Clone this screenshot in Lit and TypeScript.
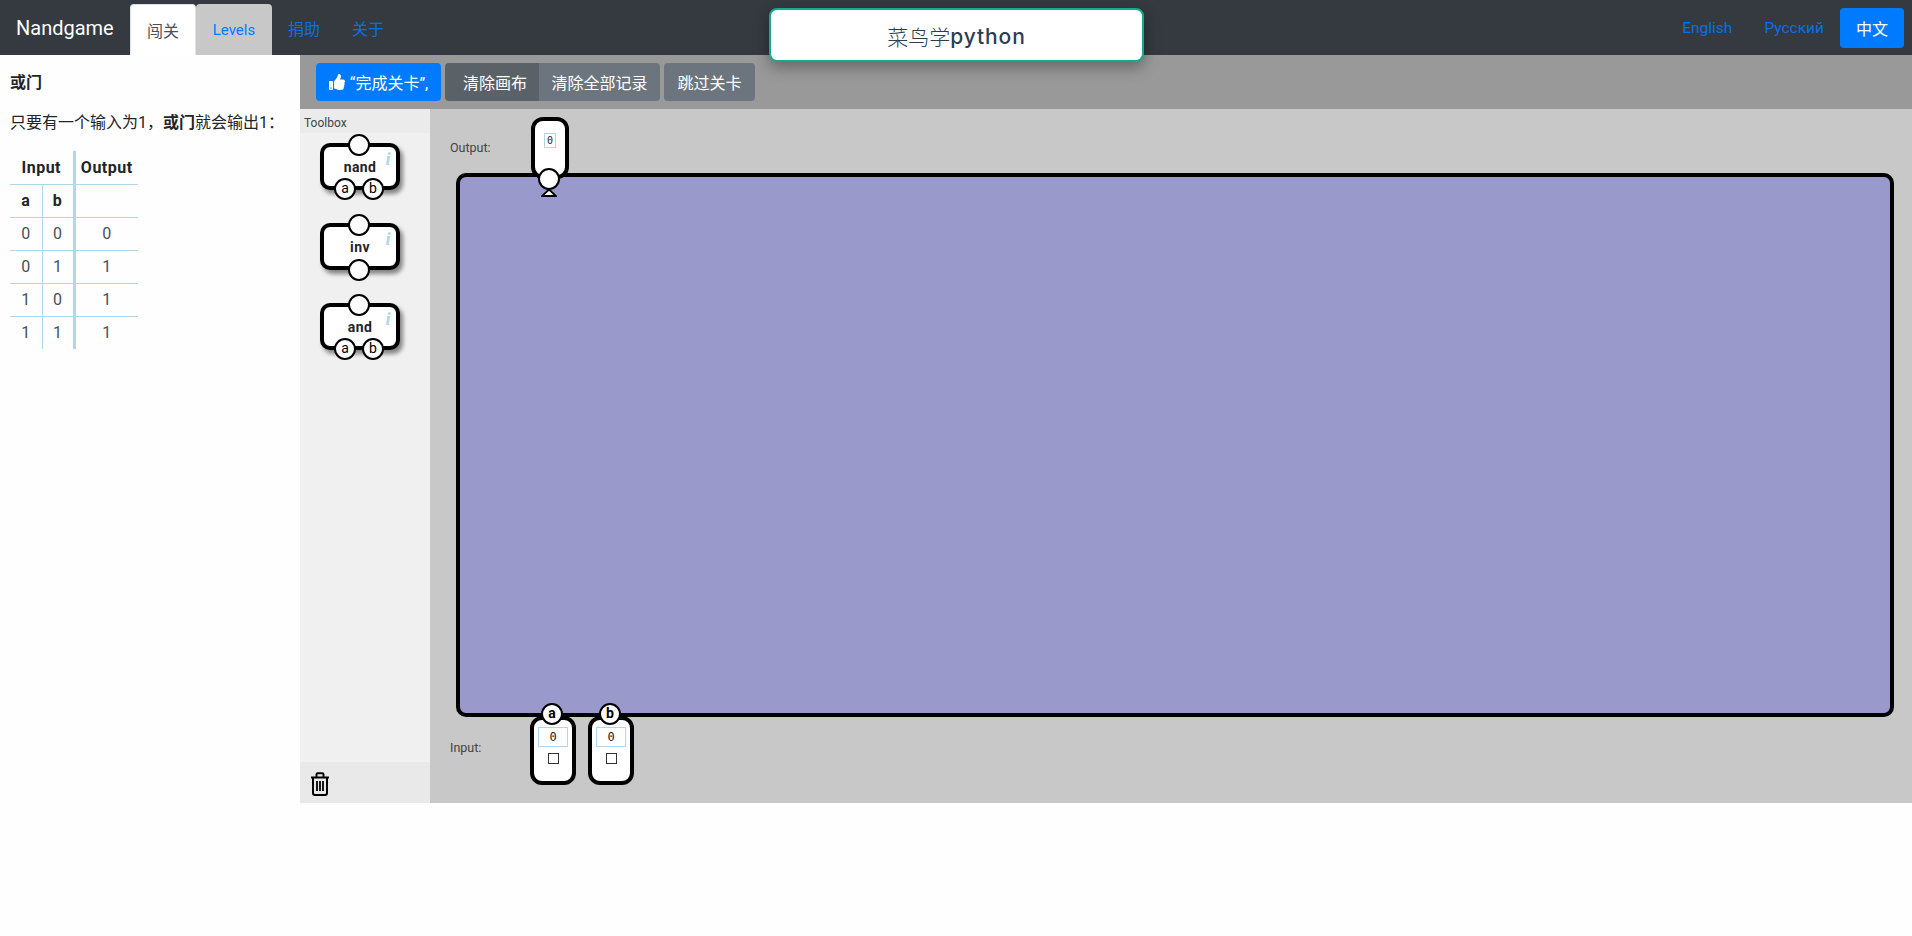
import { LitElement, html, css, svg } from "lit";
import { customElement } from "lit/decorators.js";

const SANS = css`Roboto, "Noto Sans CJK SC", sans-serif`;

const thumb = svg`<path d="M104 224H24c-13.255 0-24 10.745-24 24v240c0 13.255 10.745 24 24 24h80c13.255 0 24-10.745 24-24V248c0-13.255-10.745-24-24-24zM64 472c-13.255 0-24-10.745-24-24s10.745-24 24-24 24 10.745 24 24-10.745 24-24 24zM384 81.452c0 42.416-25.97 66.208-33.277 94.548h101.723c33.397 0 59.397 27.746 59.553 58.098.084 17.938-7.546 37.249-19.439 49.197l-.11.11c9.836 23.337 8.237 56.037-9.308 79.469 8.681 25.895-.069 57.704-16.382 74.757 4.298 17.598 2.244 32.575-6.148 44.632C440.202 511.587 389.616 512 346.839 512l-2.845-.001c-48.287-.017-87.806-17.598-119.56-31.725-15.957-7.099-36.821-15.887-52.651-16.178-6.54-.12-11.783-5.457-11.783-11.998v-213.77c0-3.2 1.282-6.271 3.558-8.521 39.614-39.144 56.648-80.587 89.117-113.111 14.804-14.832 20.188-37.236 25.393-58.902C282.515 39.293 291.817 0 312 0c24 0 72 8 72 81.452z"/>`;

@customElement("app-root")
export class AppRoot extends LitElement {
  static styles = css`
    :host { display: block; width: 1912px; height: 936px; background: #fefefe; font-family: ${SANS}; font-size: 16px; color: #212529; overflow: hidden; position: relative; }
    * { box-sizing: border-box; }
    nav { height: 55px; background: #343a40; display: flex; align-items: flex-end; padding: 0 8px 0 16px; }
    .brand { color: #fff; font-size: 20px; width: 114px; align-self: center; line-height: 30px; white-space: nowrap; }
    .tab { height: 51px; display: flex; align-items: center; justify-content: center; border-radius: 4px 4px 0 0; font-size: 16px; }
    .tab.on { width: 66px; background: #fff; color: #495057; border: 1px solid #dee2e6; border-bottom: 0; }
    .tab.lv { width: 76px; background: #c8c8c8; color: #007bff; font-size: 15px; }
    .link { color: #007bff; height: 51px; display: flex; align-items: center; padding-bottom: 3px; white-space: nowrap; opacity: .85; }
    .l1 { margin-left: 16px; }
    .l2 { margin-left: 32px; }
    .spacer { flex: 1; }
    .en { margin-right: 32px; font-size: 15.5px; }
    .ru { margin-right: 16px; font-size: 15.5px; }
    .zh { width: 64px; height: 40px; margin-bottom: 7px; background: #007bff; color: #fff; border-radius: 4px; display: flex; align-items: center; justify-content: center; }
    .toast { position: absolute; left: 769px; top: 8px; width: 375px; height: 54px; background: #fff; border: 2px solid #16a98c; border-radius: 8px; box-shadow: 0 5px 15px rgba(0,0,0,.35); display: flex; align-items: center; justify-content: center; font-family: Inter, "Noto Sans CJK SC", sans-serif; font-size: 21px; color: #2c3e50; padding-top: 2px; }
    .toast b { font-weight: 500; letter-spacing: .9px; }
    .toast span { font-weight: 300; }
    main { display: grid; grid-template-columns: 300px 1fr; height: 748px; }
    .help { padding: 0 10px; }
    h1 { font-size: 16px; font-weight: 700; margin: 0; padding-top: 16px; line-height: 24px; }
    p { margin: 16px 0 0; line-height: 24px; font-size: 16px; white-space: nowrap; }
    p b { font-weight: 700; }
    table { border-collapse: collapse; margin-top: 16px; width: 128px; table-layout: fixed; font-size: 16px; }
    col.n { width: 32px; }
    col.w { width: 64px; }
    th, td { height: 33px; padding: 0; text-align: center; border-bottom: 1px solid #add8e6; font-weight: 400; color: #212529; }
    td { color: #495057; }
    th { font-weight: 700; letter-spacing: .5px; }
    tr:last-child td { border-bottom: 0; }
    .cb { border-left: 1px solid #add8e6; }
    .co { border-left: 3px solid #add8e6; }
    .work { display: grid; grid-template-rows: 54px 694px; min-width: 0; }
    .bar { background: #999; display: flex; gap: 4px; padding: 8px 16px 0; }
    .btn { height: 38px; border-radius: 4px; color: #fff; background: #6c757d; display: flex; align-items: center; justify-content: center; font-size: 16px; white-space: nowrap; }
    .primary { width: 125px; background: #007bff; gap: 5px; }
    .primary svg { width: 16px; height: 16px; fill: #fff; }
    .group { display: flex; }
    .clear { width: 94px; background: #5a6268; border-radius: 4px 0 0 4px; padding-left: 6px; }
    .all { width: 121px; border-radius: 0 4px 4px 0; }
    .skip { width: 91px; }
    .panes { display: grid; grid-template-columns: 130px 1fr; min-height: 0; }
    .toolbox { background: #f0f0f0; display: flex; flex-direction: column; }
    .tb-h { height: 24px; background: #ebebeb; font-size: 12px; color: #444; padding-left: 4px; line-height: 28px; }
    .tb-body { flex: 1; display: flex; flex-direction: column; gap: 33px; padding: 10px 0 0 20px; }
    .trash { height: 41px; background: #e9e9e9; padding: 10px 0 0 10px; }
    .trash svg { display: block; width: 20px; height: 24px; }
    .gate { position: relative; width: 80px; height: 47px; background: #fff; border: 4px solid #000; border-radius: 10px; box-shadow: 3px 4px 4px rgba(0,0,0,.45); display: flex; align-items: center; justify-content: center; font-weight: 700; font-size: 14px; letter-spacing: .4px; }
    .pin { position: absolute; width: 22px; height: 22px; background: #fff; border: 2.5px solid #000; border-radius: 50%; display: flex; align-items: center; justify-content: center; font-size: 14px; font-weight: 400; letter-spacing: 0; line-height: 1; padding-bottom: 2px; color: #000; }
    .pin.top { left: 24px; top: -13px; }
    .pin.bot { left: 24px; bottom: -15px; }
    .pin.a { left: 10px; bottom: -14px; }
    .pin.b { left: 38px; bottom: -14px; }
    .info { position: absolute; right: 5px; top: 3px; color: #add8e6; font: italic 700 18px/18px "Liberation Serif", serif; }
    .canvas { background: #c8c8c8; position: relative; padding: 64px 18px 0 26px; }
    .board { height: 544px; background: #9999cb; border: 4px solid #000; border-radius: 10px; }
    .lab { position: absolute; left: 20px; font-size: 12.5px; color: #444; line-height: 16px; }
    .lab.o { top: 31px; }
    .lab.i { top: 631px; }
    .node { position: absolute; background: #fff; border: 4px solid #000; border-radius: 12px; }
    .node.out { left: 101px; top: 8px; width: 38px; height: 62px; }
    .node.in { top: 607px; width: 46px; height: 69px; }
    .node.in.x { left: 100px; }
    .node.in.y { left: 158px; }
    .val { position: absolute; border: 1px solid #add8e6; font: 10px "DejaVu Sans Mono", monospace; color: #222; display: flex; align-items: center; justify-content: center; background: #fff; }
    .out .val { left: 9px; top: 12px; width: 12px; height: 15px; }
    .in .val { left: 4px; top: 7px; width: 30px; height: 20px; font-size: 12px; }
    .chk { position: absolute; left: 14px; top: 33px; width: 11px; height: 11px; border: 1.5px solid #333; background: #fff; }
    .cpin { position: absolute; width: 22px; height: 22px; background: #fff; border: 2.5px solid #000; border-radius: 50%; }
    .out-pin { left: 108px; top: 59px; }
    .tri { position: absolute; left: 111px; top: 79px; width: 16px; height: 9px; }
    .in .pin { left: 7px; top: -17px; font-weight: 700; font-size: 14px; }
  `;

  private gate(name: string, kind: "two" | "one") {
    return html`<div class="gate">
      <span>${name}</span>
      <i class="info">i</i>
      <div class="pin top"></div>
      ${kind === "two"
        ? html`<div class="pin a">a</div><div class="pin b">b</div>`
        : html`<div class="pin bot"></div>`}
    </div>`;
  }

  render() {
    const rows = [[0, 0, 0], [0, 1, 1], [1, 0, 1], [1, 1, 1]];
    return html`
      <nav>
        <div class="brand">Nandgame</div>
        <div class="tab on">闯关</div>
        <div class="tab lv">Levels</div>
        <div class="link l1">捐助</div>
        <div class="link l2">关于</div>
        <div class="spacer"></div>
        <div class="link en">English</div>
        <div class="link ru">Русский</div>
        <div class="zh">中文</div>
      </nav>
      <div class="toast"><span>菜鸟学</span><b>python</b></div>
      <main>
        <section class="help">
          <h1>或门</h1>
          <p>只要有一个输入为1，<b>或门</b>就会输出1：</p>
          <table>
            <colgroup><col class="n" /><col class="n" /><col class="w" /></colgroup>
            <tr><th colspan="2">Input</th><th class="co">Output</th></tr>
            <tr><th>a</th><th class="cb">b</th><th class="co"></th></tr>
            ${rows.map((r) => html`<tr><td>${r[0]}</td><td class="cb">${r[1]}</td><td class="co">${r[2]}</td></tr>`)}
          </table>
        </section>
        <section class="work">
          <div class="bar">
            <div class="btn primary"><svg viewBox="0 0 512 512">${thumb}</svg><span>“完成关卡”,</span></div>
            <div class="group"><div class="btn clear">清除画布</div><div class="btn all">清除全部记录</div></div>
            <div class="btn skip">跳过关卡</div>
          </div>
          <div class="panes">
            <div class="toolbox">
              <div class="tb-h">Toolbox</div>
              <div class="tb-body">
                ${this.gate("nand", "two")}
                ${this.gate("inv", "one")}
                ${this.gate("and", "two")}
              </div>
              <div class="trash">
                <svg viewBox="0 0 20 24" fill="none" stroke="#000" stroke-width="2">
                  <path d="M1 5.500h18M6.500 5V2.500q0-1.200 1.200-1.200h4.600q1.200 0 1.200 1.200V5M3 6v15q0 2 2 2h10q2 0 2-2V6"/>
                  <path d="M7 9v10M10 9v10M13 9v10" stroke-width="1.800"/>
                </svg>
              </div>
            </div>
            <div class="canvas">
              <div class="board"></div>
              <div class="lab o">Output:</div>
              <div class="lab i">Input:</div>
              <div class="node out"><div class="val">0</div></div>
              <svg class="tri" viewBox="0 0 16 9"><path d="M8 1.500 L15 8 H1 Z" fill="#fff" stroke="#000" stroke-width="1.800"/></svg>
              <div class="cpin out-pin"></div>
              <div class="node in x"><div class="pin">a</div><div class="val">0</div><div class="chk"></div></div>
              <div class="node in y"><div class="pin">b</div><div class="val">0</div><div class="chk"></div></div>
            </div>
          </div>
        </section>
      </main>
    `;
  }
}
